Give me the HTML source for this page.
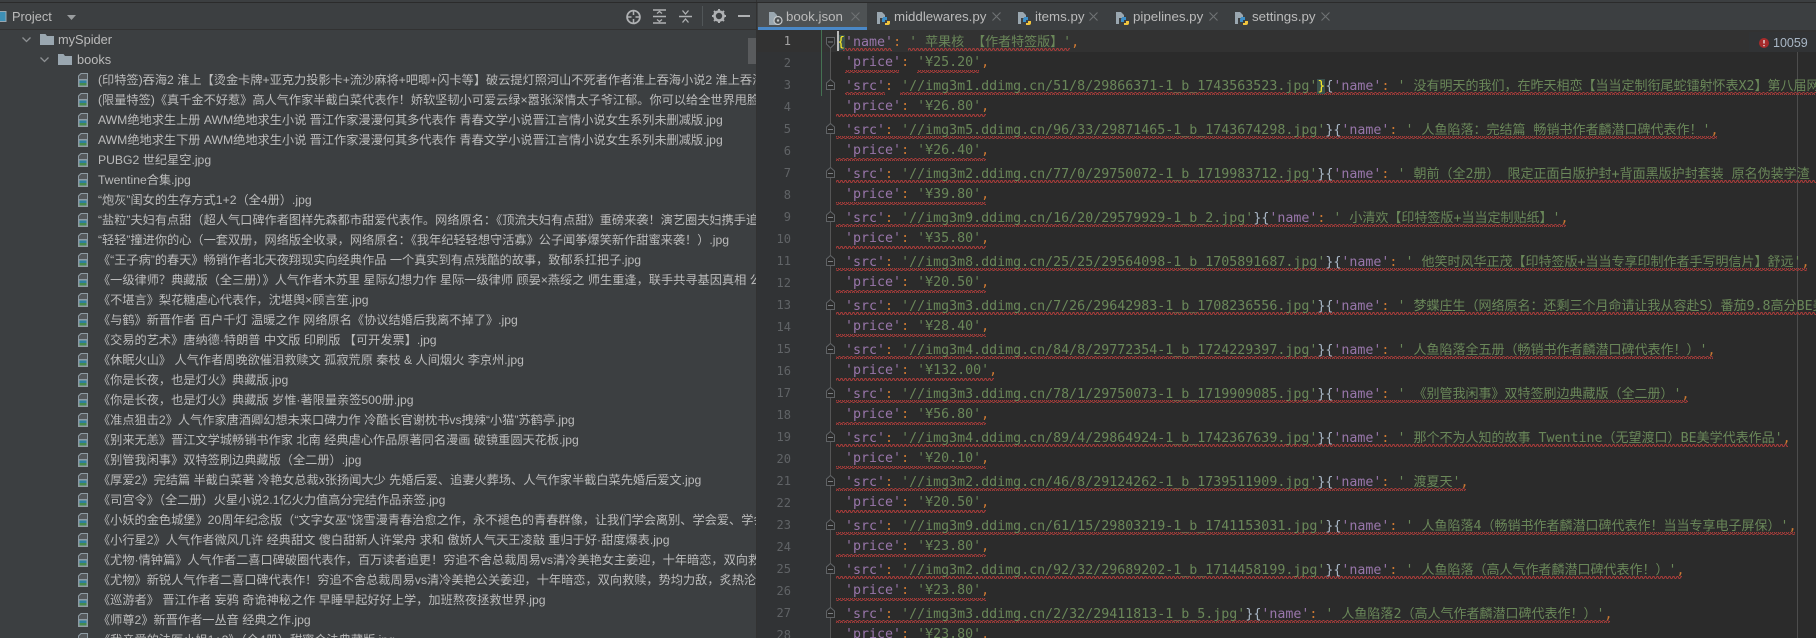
<!DOCTYPE html>
<html lang="zh">
<head>
<meta charset="utf-8">
<title>book.json</title>
<style>
html,body{margin:0;padding:0;width:1816px;height:638px;overflow:hidden;background:#3c3f41}
*{box-sizing:border-box}
.a{position:absolute}
#left{left:0;top:0;width:756px;height:638px;background:#3c3f41;overflow:hidden;font-family:"Liberation Sans","Noto Sans CJK SC",sans-serif;color:#bbb}
#strip{left:0;top:2px;width:1816px;height:1px;background:#2b2b2b;z-index:9}
#hdr{left:0;top:29px;width:756px;height:1px;background:#323232}
.r{position:relative;height:20px;line-height:20px;padding-left:98px;white-space:nowrap;font-size:12.2px}
.r svg{position:absolute;left:78px;top:3px;width:10px;height:14px}
#tree{left:0;top:70px;width:756px;height:568px;overflow:hidden}
#tabs{left:757px;top:3px;width:1059px;height:27px;background:#3c3f41;font-family:"Liberation Sans",sans-serif;font-size:13.3px;color:#bbb;line-height:27px}
#tabs span{position:absolute;top:0;white-space:nowrap}
#tabs svg{position:absolute;top:9px;width:14px;height:13px}
#tabs svg.x{top:9px;width:9px;height:9px}
#gut{left:757px;top:30px;width:74px;height:608px;background:#313335}
#ed{left:831px;top:30px;width:985px;height:608px;background:#2b2b2b}
#band{left:757px;top:30px;width:1059px;height:22px;background:#323232}
#nums{left:757px;top:30px;width:34px;height:608px;overflow:hidden;color:#606366;font:12px/22px "DejaVu Sans Mono",monospace;text-align:right}
#code{left:837px;top:30px;width:979px;height:608px;overflow:hidden;font:13.3px/22px "DejaVu Sans Mono","WenQuanYi Zen Hei",monospace;color:#6a8759}
#code div{height:22px;overflow:hidden;white-space:pre}
#code i{font-style:normal;color:#9876aa}
#code b{font-weight:normal;color:#cc7832}
#code em{font-style:normal;color:#a9b7c6}
#code u{text-decoration:none;font-size:13px;font-family:"WenQuanYi Zen Hei","Noto Sans CJK SC",sans-serif}
#code .m{background:#3b514d;color:#ffef28}
#wid{left:1749px;top:32px;width:67px;height:20px;background:#313335;color:#a9b7c6;font:12.5px/22px "Liberation Sans",sans-serif}
</style>
</head>
<body>
<svg width="0" height="0" style="position:absolute">
<defs>
<symbol id="img" viewBox="0 0 10 14">
<path d="M3 .5H9.5V7H.5V3z" fill="#55595c" stroke="#8f9ca4"/>
<rect x="0" y="6" width="10" height="8" fill="#8f9ca4"/>
<rect x="1.5" y="7.5" width="7" height="2.5" fill="#2f7f9f"/>
<rect x="1.5" y="10" width="7" height="2.5" fill="#478a4e"/>
</symbol>
<symbol id="py" viewBox="0 0 14 13">
<path d="M0 0H5L8 3V6H3V12H0z" fill="#9aa7b0"/>
<path d="M6 5H10V8H8V10H5V7.5Q5 6 6 6z" fill="#3d8fc8"/>
<path d="M13 8V11Q13 13 11 13H8V11H10V9H13z" fill="#f2c53d"/>
</symbol>
<symbol id="xx" viewBox="0 0 9 9">
<path d="M.5 .5L8.500 8.500M8.500 .5L.5 8.500" stroke="#6f7274" stroke-width="1.100" fill="none"/>
</symbol>
<symbol id="fd" viewBox="0 0 9 11">
<path d="M.5 10.5V4L4.5 .5 8.500 4V10.500z" fill="#2b2b2b" stroke="#606366"/>
<path d="M2 6.500H7" stroke="#7a7d80"/>
</symbol>
<pattern id="w" width="4" height="3" patternUnits="userSpaceOnUse">
<path d="M0 2.500L1 .5 2 .5 3 2.500 4 2.500" fill="none" stroke="#a83c3a" stroke-width="1"/>
</pattern>
</defs>
</svg>

<div id="left" class="a">
<svg class="a" style="left:0;top:11px" width="7" height="12"><rect x="-3" y=".5" width="9" height="10" fill="#3d8fb5" stroke="#9aa7b0"/></svg>
<div class="a" style="left:12px;top:7px;font-size:12.8px;line-height:20px">Project</div>
<svg class="a" style="left:67px;top:15px" width="9" height="5"><path d="M0 0H9L4.500 5z" fill="#9a9d9f"/></svg>
<svg class="a" style="left:625px;top:9px" width="17" height="16" fill="none" stroke="#afb1b3" stroke-width="1.800"><circle cx="8.500" cy="8" r="6.400"/><path d="M8.500 2V6M8.500 10V14M2.500 8H6.500M10.500 8H14.500" stroke-width="1.500"/></svg>
<svg class="a" style="left:653px;top:9px" width="13" height="15" fill="none" stroke="#afb1b3" stroke-width="1.500"><path d="M0 1H13M0 14H13M0 7.500H13" stroke-dasharray="none"/><path d="M4 4.500L6.500 2.500 9 4.500M4 10.500L6.500 12.500 9 10.500" stroke-width="1.300"/></svg>
<svg class="a" style="left:679px;top:9px" width="13" height="15" fill="none" stroke="#afb1b3" stroke-width="1.500"><path d="M0 7.500H13"/><path d="M3.500 1.500L6.500 5 9.500 1.500M3.500 13.500L6.500 10 9.500 13.500" stroke-width="1.300"/></svg>
<div class="a" style="left:702px;top:6px;width:1px;height:20px;background:#515658"></div>
<svg class="a" style="left:712px;top:9px" width="14" height="14"><circle cx="7" cy="7" r="4.500" fill="none" stroke="#afb1b3" stroke-width="2.600"/><path d="M7 0V14M0 7H14M2 2L12 12M12 2L2 12" stroke="#afb1b3" stroke-width="2" stroke-dasharray="2 10 2 0"/></svg>
<div class="a" style="left:738px;top:15px;width:12px;height:2px;background:#afb1b3"></div>
<div id="hdr" class="a"></div>

<svg class="a" style="left:22px;top:37px" width="9" height="6" fill="none" stroke="#8d9093" stroke-width="1.300"><path d="M.5 .5L4.500 4.500 8.500 .5"/></svg>
<svg class="a" style="left:40px;top:34px" width="14" height="11"><path d="M0 0H5.500L7 2H14V11H0z" fill="#9aa7b0"/></svg>
<div class="a" style="left:58px;top:30px;font-size:12.800px;line-height:20px">mySpider</div>
<svg class="a" style="left:40px;top:57px" width="9" height="6" fill="none" stroke="#8d9093" stroke-width="1.300"><path d="M.5 .5L4.500 4.500 8.500 .5"/></svg>
<svg class="a" style="left:58px;top:54px" width="14" height="11"><path d="M0 0H5.500L7 2H14V11H0z" fill="#9aa7b0"/></svg>
<div class="a" style="left:77px;top:50px;font-size:12.800px;line-height:20px">books</div>

<div id="tree" class="a">
<div class="r"><svg><use href="#img"/></svg>(印特签)吞海2 淮上【烫金卡牌+亚克力投影卡+流沙麻将+吧唧+闪卡等】破云提灯照河山不死者作者淮上吞海小说2 淮上吞海小说系列</div>
<div class="r"><svg><use href="#img"/></svg>(限量特签)《真千金不好惹》高人气作家半截白菜代表作！娇软坚韧小可爱云绿×嚣张深情太子爷江郁。你可以给全世界甩脸，但不能</div>
<div class="r"><svg><use href="#img"/></svg>AWM绝地求生上册 AWM绝地求生小说 晋江作家漫漫何其多代表作 青春文学小说晋江言情小说女生系列未删减版.jpg</div>
<div class="r"><svg><use href="#img"/></svg>AWM绝地求生下册 AWM绝地求生小说 晋江作家漫漫何其多代表作 青春文学小说晋江言情小说女生系列未删减版.jpg</div>
<div class="r"><svg><use href="#img"/></svg>PUBG2 世纪星空.jpg</div>
<div class="r"><svg><use href="#img"/></svg>Twentine合集.jpg</div>
<div class="r"><svg><use href="#img"/></svg>“炮灰”闺女的生存方式1+2（全4册）.jpg</div>
<div class="r"><svg><use href="#img"/></svg>“盐粒”夫妇有点甜（超人气口碑作者图样先森都市甜爱代表作。网络原名：《顶流夫妇有点甜》重磅来袭！演艺圈夫妇携手追逐梦想</div>
<div class="r"><svg><use href="#img"/></svg>“轻轻”撞进你的心（一套双册，网络版全收录，网络原名：《我年纪轻轻想守活寡》公子闻筝爆笑新作甜蜜来袭！）.jpg</div>
<div class="r"><svg><use href="#img"/></svg>《“王子病”的春天》畅销作者北天夜翔现实向经典作品 一个真实到有点残酷的故事，致郁系扛把子.jpg</div>
<div class="r"><svg><use href="#img"/></svg>《一级律师？典藏版（全三册）》人气作者木苏里 星际幻想力作 星际一级律师 顾晏×燕绥之 师生重逢，联手共寻基因真相 公理正义</div>
<div class="r"><svg><use href="#img"/></svg>《不堪言》梨花糖虐心代表作，沈堪舆×顾言笙.jpg</div>
<div class="r"><svg><use href="#img"/></svg>《与鹤》新晋作者 百户千灯 温暖之作 网络原名《协议结婚后我离不掉了》.jpg</div>
<div class="r"><svg><use href="#img"/></svg>《交易的艺术》唐纳德·特朗普 中文版 印刷版 【可开发票】.jpg</div>
<div class="r"><svg><use href="#img"/></svg>《休眠火山》 人气作者周晚欲催泪救赎文 孤寂荒原 秦枝 &amp; 人间烟火 李京州.jpg</div>
<div class="r"><svg><use href="#img"/></svg>《你是长夜，也是灯火》典藏版.jpg</div>
<div class="r"><svg><use href="#img"/></svg>《你是长夜，也是灯火》典藏版 岁惟·著限量亲签500册.jpg</div>
<div class="r"><svg><use href="#img"/></svg>《准点狙击2》人气作家唐酒卿幻想未来口碑力作 冷酷长官谢枕书vs拽辣“小猫”苏鹤亭.jpg</div>
<div class="r"><svg><use href="#img"/></svg>《别来无恙》晋江文学城畅销书作家 北南 经典虐心作品原著同名漫画 破镜重圆天花板.jpg</div>
<div class="r"><svg><use href="#img"/></svg>《别管我闲事》双特签刷边典藏版（全二册）.jpg</div>
<div class="r"><svg><use href="#img"/></svg>《厚爱2》完结篇 半截白菜著 冷艳女总裁x张扬闻大少 先婚后爱、追妻火葬场、人气作家半截白菜先婚后爱文.jpg</div>
<div class="r"><svg><use href="#img"/></svg>《司宫令》（全二册）火星小说2.1亿火力值高分完结作品亲签.jpg</div>
<div class="r"><svg><use href="#img"/></svg>《小妖的金色城堡》20周年纪念版（“文字女巫”饶雪漫青春治愈之作，永不褪色的青春群像，让我们学会离别、学会爱、学会成长</div>
<div class="r"><svg><use href="#img"/></svg>《小行星2》人气作者微风几许 经典甜文 傻白甜新人许棠舟 求和 傲娇人气天王凌敲 重归于好·甜度爆表.jpg</div>
<div class="r"><svg><use href="#img"/></svg>《尤物·情钟篇》人气作者二喜口碑破圈代表作，百万读者追更！穷追不舍总裁周易vs清冷美艳女主姜迎，十年暗恋，双向救赎，势均</div>
<div class="r"><svg><use href="#img"/></svg>《尤物》新锐人气作者二喜口碑代表作！穷追不舍总裁周易vs清冷美艳公关姜迎，十年暗恋，双向救赎，势均力敌，炙热沦陷，相互</div>
<div class="r"><svg><use href="#img"/></svg>《巡游者》 晋江作者 妄鸦 奇诡神秘之作 早睡早起好好上学，加班熬夜拯救世界.jpg</div>
<div class="r"><svg><use href="#img"/></svg>《师尊2》新晋作者一丛音 经典之作.jpg</div>
<div class="r"><svg><use href="#img"/></svg>《我亲爱的法医小姐1+2》（全4册）甜蜜合法典藏版.jpg</div>
</div>
<div class="a" style="left:748px;top:38px;width:8px;height:26px;background:#595b5d"></div>
</div>
<div class="a" style="left:756px;top:0;width:1px;height:638px;background:#323232"></div>
<div id="strip" class="a"></div>

<div id="tabs" class="a">
<div class="a" style="left:1px;top:0;width:109px;height:27px;background:#4e5254"></div>
<div class="a" style="left:1px;top:24px;width:109px;height:3px;background:#4a88c7"></div>
<svg style="left:12px" viewBox="0 0 14 13"><path d="M0 0H5L8 3V13H0z" fill="#9aa7b0"/><circle cx="9" cy="8.500" r="4" fill="#4e5254" stroke="#c5c8ca" stroke-width="1.200"/><circle cx="9" cy="8.500" r="1.200" fill="#c5c8ca"/></svg>
<span style="left:29px">book.json</span><svg class="x" style="left:94px"><use href="#xx"/></svg>
<svg style="left:120px"><use href="#py"/></svg>
<span style="left:137px">middlewares.py</span><svg class="x" style="left:235px"><use href="#xx"/></svg>
<svg style="left:261px"><use href="#py"/></svg>
<span style="left:278px">items.py</span><svg class="x" style="left:332px"><use href="#xx"/></svg>
<svg style="left:359px"><use href="#py"/></svg>
<span style="left:376px">pipelines.py</span><svg class="x" style="left:452px"><use href="#xx"/></svg>
<svg style="left:478px"><use href="#py"/></svg>
<span style="left:495px">settings.py</span><svg class="x" style="left:564px"><use href="#xx"/></svg>
</div>

<div id="gut" class="a"></div>
<div id="ed" class="a"></div>
<div id="band" class="a"></div>
<div class="a" style="left:1797px;top:52px;width:1px;height:586px;background:#4d4d4d"></div>
<div class="a" style="left:821px;top:30px;width:1px;height:66px;background:#447152"></div>

<div id="nums" class="a"><span style="color:#a4a3a3">1</span><br>2<br>3<br>4<br>5<br>6<br>7<br>8<br>9<br>10<br>11<br>12<br>13<br>14<br>15<br>16<br>17<br>18<br>19<br>20<br>21<br>22<br>23<br>24<br>25<br>26<br>27<br>28</div>

<svg class="a" style="left:826px;top:30px" width="11" height="608">
<path d="M4.500 18V608" stroke="#555" stroke-width="1"/>
<path d="M.5 7.500H8.500V14L4.500 18 .5 14z" fill="#2b2b2b" stroke="#606366"/><path d="M2 12H7" stroke="#7a7d80"/>
<use href="#fd" x="0" y="49" width="9" height="11"/>
<use href="#fd" x="0" y="93" width="9" height="11"/>
<use href="#fd" x="0" y="137" width="9" height="11"/>
<use href="#fd" x="0" y="181" width="9" height="11"/>
<use href="#fd" x="0" y="225" width="9" height="11"/>
<use href="#fd" x="0" y="269" width="9" height="11"/>
<use href="#fd" x="0" y="313" width="9" height="11"/>
<use href="#fd" x="0" y="357" width="9" height="11"/>
<use href="#fd" x="0" y="401" width="9" height="11"/>
<use href="#fd" x="0" y="445" width="9" height="11"/>
<use href="#fd" x="0" y="489" width="9" height="11"/>
<use href="#fd" x="0" y="533" width="9" height="11"/>
<use href="#fd" x="0" y="577" width="9" height="11"/>
</svg>

<svg class="a" style="left:0;top:0" width="1816" height="638" fill="url(#w)">
<rect x="843" y="48" width="49" height="3"/><rect x="908" y="48" width="162" height="3"/>
<rect x="845" y="70" width="54" height="3"/><rect x="917" y="70" width="62" height="3"/>
<rect x="845" y="92" width="40" height="3"/><rect x="900" y="92" width="916" height="3"/>
<rect x="836" y="114" width="150" height="3"/>
<rect x="836" y="136" width="881" height="3"/>
<rect x="836" y="158" width="150" height="3"/>
<rect x="836" y="180" width="980" height="3"/>
<rect x="836" y="202" width="150" height="3"/>
<rect x="836" y="224" width="730" height="3"/>
<rect x="836" y="246" width="150" height="3"/>
<rect x="836" y="268" width="971" height="3"/>
<rect x="836" y="290" width="150" height="3"/>
<rect x="836" y="312" width="980" height="3"/>
<rect x="836" y="334" width="150" height="3"/>
<rect x="836" y="356" width="877" height="3"/>
<rect x="836" y="378" width="158" height="3"/>
<rect x="836" y="400" width="852" height="3"/>
<rect x="836" y="422" width="150" height="3"/>
<rect x="836" y="444" width="952" height="3"/>
<rect x="836" y="466" width="150" height="3"/>
<rect x="836" y="488" width="630" height="3"/>
<rect x="836" y="510" width="150" height="3"/>
<rect x="836" y="532" width="959" height="3"/>
<rect x="836" y="554" width="150" height="3"/>
<rect x="836" y="576" width="846" height="3"/>
<rect x="836" y="598" width="150" height="3"/>
<rect x="836" y="620" width="774" height="3"/>
</svg>

<div id="code" class="a"><div><em class="m">{</em><i>'name'</i><b>:</b> ' <u>苹果核</u> <u>【作者特签版】</u>'<b>,</b></div><div> <i>'price'</i><b>:</b> '¥25.20'<b>,</b></div><div> <i>'src'</i><b>:</b> '//img3m1.ddimg.cn/51/8/29866371-1_b_1743563523.jpg'<em class="m">}</em><em>{</em><i>'name'</i><b>:</b> ' <u>没有明天的我们，在昨天相恋【当当定制衔尾蛇镭射怀表</u>X2<u>】第八届网络文学</u></div><div> <i>'price'</i><b>:</b> '¥26.80'<b>,</b></div><div> <i>'src'</i><b>:</b> '//img3m5.ddimg.cn/96/33/29871465-1_b_1743674298.jpg'<em>}{</em><i>'name'</i><b>:</b> ' <u>人鱼陷落：完结篇</u> <u>畅销书作者麟潜口碑代表作！</u>'<b>,</b></div><div> <i>'price'</i><b>:</b> '¥26.40'<b>,</b></div><div> <i>'src'</i><b>:</b> '//img3m2.ddimg.cn/77/0/29750072-1_b_1719983712.jpg'<em>}{</em><i>'name'</i><b>:</b> ' <u>朝前（全</u>2<u>册）</u> <u>限定正面白版护封</u>+<u>背面黑版护封套装</u> <u>原名伪装学渣</u></div><div> <i>'price'</i><b>:</b> '¥39.80'<b>,</b></div><div> <i>'src'</i><b>:</b> '//img3m9.ddimg.cn/16/20/29579929-1_b_2.jpg'<em>}{</em><i>'name'</i><b>:</b> ' <u>小清欢【印特签版</u>+<u>当当定制贴纸】</u>'<b>,</b></div><div> <i>'price'</i><b>:</b> '¥35.80'<b>,</b></div><div> <i>'src'</i><b>:</b> '//img3m8.ddimg.cn/25/25/29564098-1_b_1705891687.jpg'<em>}{</em><i>'name'</i><b>:</b> ' <u>他笑时风华正茂【印特签版</u>+<u>当当专享印制作者手写明信片】舒远</u>'<b>,</b></div><div> <i>'price'</i><b>:</b> '¥20.50'<b>,</b></div><div> <i>'src'</i><b>:</b> '//img3m3.ddimg.cn/7/26/29642983-1_b_1708236556.jpg'<em>}{</em><i>'name'</i><b>:</b> ' <u>梦蝶庄生（网络原名：还剩三个月命请让我从容赴</u>S<u>）番茄</u>9.8<u>高分</u>BE<u>美学</u></div><div> <i>'price'</i><b>:</b> '¥28.40'<b>,</b></div><div> <i>'src'</i><b>:</b> '//img3m4.ddimg.cn/84/8/29772354-1_b_1724229397.jpg'<em>}{</em><i>'name'</i><b>:</b> ' <u>人鱼陷落全五册（畅销书作者麟潜口碑代表作！）</u>'<b>,</b></div><div> <i>'price'</i><b>:</b> '¥132.00'<b>,</b></div><div> <i>'src'</i><b>:</b> '//img3m3.ddimg.cn/78/1/29750073-1_b_1719909085.jpg'<em>}{</em><i>'name'</i><b>:</b> ' <u>《别管我闲事》双特签刷边典藏版（全二册）</u>'<b>,</b></div><div> <i>'price'</i><b>:</b> '¥56.80'<b>,</b></div><div> <i>'src'</i><b>:</b> '//img3m4.ddimg.cn/89/4/29864924-1_b_1742367639.jpg'<em>}{</em><i>'name'</i><b>:</b> ' <u>那个不为人知的故事</u> Twentine<u>（无望渡口）</u>BE<u>美学代表作品</u>'<b>,</b></div><div> <i>'price'</i><b>:</b> '¥20.10'<b>,</b></div><div> <i>'src'</i><b>:</b> '//img3m2.ddimg.cn/46/8/29124262-1_b_1739511909.jpg'<em>}{</em><i>'name'</i><b>:</b> ' <u>渡夏天</u>'<b>,</b></div><div> <i>'price'</i><b>:</b> '¥20.50'<b>,</b></div><div> <i>'src'</i><b>:</b> '//img3m9.ddimg.cn/61/15/29803219-1_b_1741153031.jpg'<em>}{</em><i>'name'</i><b>:</b> ' <u>人鱼陷落</u>4<u>（畅销书作者麟潜口碑代表作！当当专享电子屏保）</u>'<b>,</b></div><div> <i>'price'</i><b>:</b> '¥23.80'<b>,</b></div><div> <i>'src'</i><b>:</b> '//img3m2.ddimg.cn/92/32/29689202-1_b_1714458199.jpg'<em>}{</em><i>'name'</i><b>:</b> ' <u>人鱼陷落（高人气作者麟潜口碑代表作！）</u>'<b>,</b></div><div> <i>'price'</i><b>:</b> '¥23.80'<b>,</b></div><div> <i>'src'</i><b>:</b> '//img3m3.ddimg.cn/2/32/29411813-1_b_5.jpg'<em>}{</em><i>'name'</i><b>:</b> ' <u>人鱼陷落</u>2<u>（高人气作者麟潜口碑代表作！）</u>'<b>,</b></div><div> <i>'price'</i><b>:</b> '¥23.80'<b>,</b></div></div>

<div class="a" style="left:837px;top:31px;width:2px;height:20px;background:#bbb"></div>

<div id="wid" class="a">
<svg class="a" style="left:10px;top:6px" width="10" height="10"><circle cx="5" cy="5" r="5" fill="#a62b2b"/><path d="M5 2V5.500M5 7V8.300" stroke="#e8e8e8" stroke-width="1.300"/></svg>
<span class="a" style="left:24px;top:0">10059</span>
</div>
</body>
</html>
